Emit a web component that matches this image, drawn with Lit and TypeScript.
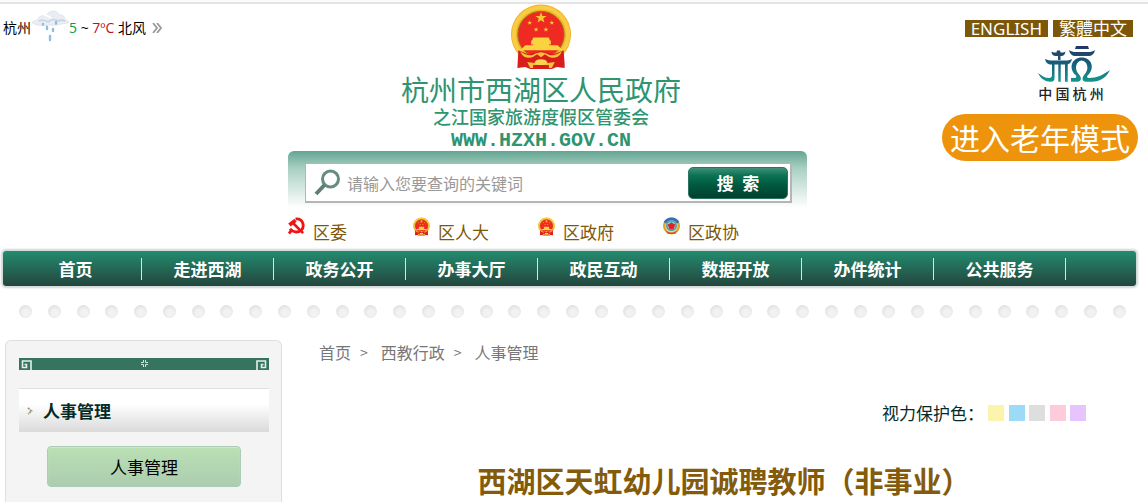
import { LitElement, html, css, svg } from "lit";
import { customElement } from "lit/decorators.js";
import { styleMap } from "lit/directives/style-map.js";

const star = (x: number, y: number, r: number) => {
  const pts: string[] = [];
  for (let i = 0; i < 10; i++) {
    const a = -Math.PI / 2 + (i * Math.PI) / 5;
    const q = i % 2 ? r * 0.4 : r;
    pts.push(`${(x + q * Math.cos(a)).toFixed(1)},${(y + q * Math.sin(a)).toFixed(1)}`);
  }
  return svg`<polygon points=${pts.join(" ")} fill="#f8c832"/>`;
};

const emblem = (cls: string) => html`
  <svg class=${cls} viewBox="0 0 62 66" aria-hidden="true">
    <circle cx="31" cy="31" r="30.500" fill="#f0b427"/>
    <circle cx="31" cy="31" r="27.500" fill="none" stroke="#f9cc45" stroke-width="4"/>
    <circle cx="31" cy="31" r="23.500" fill="#ee2a22" stroke="#a56d12" stroke-width="1"/>
    ${star(31, 14, 6)}${star(19.500, 19, 2.600)}${star(42, 19, 2.600)}${star(26, 26, 2.600)}${star(36, 26, 2.600)}
    <path d="M23 34h16l1 3h1v4h-2v1h9l5 5H10l5-5h8v-1h-2v-4h1z" fill="#fbd340"/>
    <path d="M8 47l10 4 13-3 13 3 10-4 1 14 0 4-8-1-5 2H20l-5-2-8 1z" fill="#d91d1c"/>
    <path d="M10 48c6 5 12 5 16 2l5-1 5 1c4 3 10 3 16-2-2 7-9 8-14 5l-3-2-4 3-4-3-3 2c-5 3-12 2-14-5z" fill="#f6c436"/>
    <path d="M17 59l7 1c2-4 12-4 14 0l7-1-3 6h-3v-3H23v3h-3z" fill="#f6c436"/>
    <ellipse cx="31" cy="59" rx="6" ry="3" fill="#f9d650"/>
  </svg>`;

const party = html`
  <svg class="mark" viewBox="0 0 18 20" aria-hidden="true">
    <g fill="none" stroke="#f01414">
      <path d="M8 2c8-1 10 8 6 12C10 17 5 16 2 12.500" stroke-width="3"/>
      <path d="M4.500 13L1 17.500" stroke-width="3"/>
      <path d="M5 6l11 11" stroke-width="2.800"/>
      <path d="M1.500 8.500L8 3.500" stroke-width="4"/>
    </g>
  </svg>`;

const cppcc = html`
  <svg class="mark" viewBox="0 0 18 20" aria-hidden="true">
    <circle cx="9" cy="9.500" r="7.800" fill="#e6ddba" stroke="#d9a42c" stroke-width="2.400"/>
    <path d="M2 6a8 8 0 0 1 14 0" fill="none" stroke="#2d6fc0" stroke-width="3"/>
    <circle cx="9" cy="9" r="5" fill="#8accc8" stroke="#4a9a9c" stroke-width="1.500"/>
    <path d="M9 5.500l2 1.500 2 1-1 2.500-1 2.500H7l-1-2.500L5 8l2-1z" fill="#e0202a"/>
    <path d="M3 14c3 3.500 9 3.500 12 0l-2 4H5z" fill="#d8562a"/>
  </svg>`;

const cloud = html`
  <svg class="cloud" viewBox="0 0 38 32" aria-hidden="true">
    <path d="M1 13c0-2 4-3 6-3 0-4 5-5 8-4C17 0 26-1 28 5c5-1 6 3 6 5 3 0 4 2 3 3-9 1-11 3-18 2-8 2-14 0-18-2z" fill="#e9edf4" stroke="#d5dbe6" stroke-width=".6"/>
    <path d="M8 11c4-2 7 0 9 1 3-3 8-3 10-1 2-1 5-1 7 0" fill="none" stroke="#c9d2e0" stroke-width="1.500"/>
    <path d="M13 5c4 0 5 2 7 3" fill="none" stroke="#fff" stroke-width="2"/>
    <g stroke="#8dbfe2" stroke-width="2.400" stroke-linecap="round">
      <path d="M12 14v.5M16 17v2M22 19v2M25 12v1.500M19 26v4"/>
    </g>
  </svg>`;

const hangzhou = html`
  <svg class="hz" viewBox="0 0 72 37" aria-hidden="true">
    <defs>
      <linearGradient id="hzg" x1="0" y1="0" x2="0" y2="37" gradientUnits="userSpaceOnUse">
        <stop offset="0" stop-color="#26355e"/><stop offset=".5" stop-color="#14617e"/><stop offset="1" stop-color="#179a8c"/>
      </linearGradient>
    </defs>
    <g fill="url(#hzg)">
      <path d="M38 0h12l1 3H37z"/>
      <path d="M31 4c2 1.500 4 2 7 2h12c3 0 5-.5 7-2-1 4-3 6-7 6H38c-4 0-6-2-7-6z"/>
      <path d="M19 4.500h3l.5 2c2 0 4 0 5-1-.5 3-2 4.500-4 4.500h-6c-2 0-4-1.500-4-4.500 1 1 3 1 5 1z"/>
      <path d="M20 10h2.500v4H20z"/>
      <path d="M7 13c3 1.500 5 1.500 7 1.500h13c3 0 5 0 7-1.500-1 4-3 5.500-6 5.500H13c-3 0-5-1.500-6-5.500z"/>
      <path d="M14 18h2.500v14c0 2.500-1 3.700-4 3.700C7 35.700 3 33 0 27c4 3 7 5 11 5 2 0 3-1 3-3z"/>
      <path d="M20.300 18h2.400v17.700h-2.400zM27 18h2.700v17.700H27z"/>
      <path d="M33 32h3.500c2 0 2.500-1.500 1-3C30 22 34 11.500 43.700 11.500S57.500 22 50 29c-1.500 1.500-1 3 1 3 8 0 14-3 21-8-4 8-10 11.700-18 11.700h-6c-4 0-4.500-4-1.500-7.200C52 23 49 14.500 43.700 14.500S35.500 23 41 28.500c3 3.200 2.500 7.200-1.500 7.200H33z"/>
    </g>
  </svg>`;

const fret = (cls: string) => html`
  <svg class="fret ${cls}" viewBox="0 0 13 12" aria-hidden="true">
    <path d="M12 12V3H3.500v6.500h4V6.500H5.500" fill="none" stroke="#e4efea" stroke-width="1.600"/>
  </svg>`;

@customElement("app-root")
export class AppRoot extends LitElement {
  static styles = css`
    :host {
      display: block;
      overflow: hidden;
      background: #fff;
      color: #111;
      font-family: "Noto Sans CJK SC", "Open Sans", sans-serif;
      font-size: 17px;
      line-height: 24px;
    }
    * { box-sizing: border-box; }
    a { color: inherit; text-decoration: none; }
    button, input { font-family: inherit; border: 0; margin: 0; padding: 0; }
    .rule { height: 4px; border-bottom: 2px solid #e4e4e4; background: #fafafa; }
    header { display: grid; grid-template-columns: 288px 519px 1fr; height: 245px; }
    .weather { display: flex; align-items: center; height: 48px; padding-left: 3px; font-family: "Open Sans", "Noto Sans CJK SC", sans-serif; font-size: 14px; white-space: pre; color: #000; }
    .cloud { width: 38px; height: 32px; margin-top: -4px; }
    .low { color: #0a9a4a; }
    .high { color: #c01018; }
    .more { width: 10px; height: 10px; margin-left: 6px; }
    .brand { display: flex; flex-direction: column; align-items: center; padding-right: 13px; color: #2f9470; height: 147px; }
    .emblem { width: 62px; height: 66px; }
    h1 { margin: 4px 0 0; font-size: 28px; font-weight: 400; line-height: 32px; }
    .sub { font-size: 18px; font-weight: 500; line-height: 22px; }
    .site { font: bold 20px/20px "Liberation Mono", monospace; margin-top: 4px; }
    .search { height: 57px; padding: 12px 15px 5px 17px; border-radius: 6px 6px 0 0; background: linear-gradient(#63a591, #a9cfc3 30%, #fff); }
    .box { display: flex; align-items: center; height: 40px; padding: 0 2px 0 8px; background: #fff; border: 1px solid #b5b5b5; border-width: 1px 2px 2px 1px; }
    .lens { width: 27px; height: 27px; flex: none; }
    .box input { flex: 1; min-width: 0; height: 32px; margin-left: 6px; font-size: 16px; background: none; outline: 0; }
    .box input::placeholder { color: #999; opacity: 1; }
    .go { width: 100px; height: 32px; border-radius: 5px; color: #fff; font-size: 17px; font-weight: 700; line-height: 28px; background: linear-gradient(#3f9078, #0b7252 25%, #00573e 60%, #00402c); border: 1px solid #2b7560; }
    .quick { display: flex; padding-top: 8px; color: #7d5709; }
    .quick a { display: flex; width: 125px; line-height: 32px; }
    .mark { width: 17px; height: 19px; margin: 1px 8px 0 0; }
    .tools { display: flex; flex-direction: column; align-items: flex-end; padding: 16px 10px 0 0; }
    .langs { display: flex; gap: 5px; padding-right: 5px; }
    .langs a { padding: 0 6px; line-height: 17px; background: #7d5709; color: #fff; font-family: "Noto Sans", "Noto Sans CJK TC", sans-serif; }
    .city { display: flex; flex-direction: column; align-items: center; margin: 9px 28px 0 0; font-size: 14px; line-height: 20px; font-weight: 500; color: #222; }
    .city span { padding-right: 6px; }
    .hz { width: 72px; height: 37px; }
    .elder { height: 47px; margin-top: 11px; padding: 0 8px; border-radius: 24px; background: #ed940c; color: #fff; font-size: 30px; line-height: 47px; }
    nav.main { display: flex; align-items: center; margin: 2px 12px 0 3px; height: 35px; padding-left: 7px; border-radius: 3px; background: linear-gradient(#228c6e, #24453d); box-shadow: 0 0 2px 2px #d0d8d5; }
    nav.main a { width: 132px; line-height: 22px; text-align: center; font-weight: 700; color: #fff; border-right: 1px solid #d8e6e1; }
    .dots { display: flex; justify-content: space-between; padding: 0 22px 0 19px; margin-top: 19px; }
    .dots i { width: 13px; height: 13px; border-radius: 50%; background: radial-gradient(circle at 55% 60%, #f2f2f2 30%, #d6d6d6); }
    .page { display: grid; grid-template-columns: 277px 1fr; margin: 22px 12px 0 5px; }
    aside { padding: 17px 12px 15px 13px; border: 1px solid #dedede; border-bottom: 0; border-radius: 6px 6px 0 0; background: #f4f4f4; }
    .band { display: flex; justify-content: space-between; height: 12px; background: #37745f; }
    .fret { width: 13px; height: 12px; }
    .flip { transform: scaleX(-1); }
    .bloom { width: 7px; height: 7px; margin-top: 2px; }
    h2 { display: flex; align-items: center; height: 44px; margin: 18px 0 14px; padding-left: 8px; gap: 10px; font-size: 17px; color: #052b28; border-top: 1px solid #e0e0e0; background: linear-gradient(#fff 35%, #dadada); }
    .arrow { width: 6px; height: 8px; }
    .item { display: block; height: 41px; margin: 0 28px; border: 1px solid #adcbb8; border-radius: 4px; text-align: center; line-height: 39px; color: #000; background: linear-gradient(#bae0b4, #accdaf); box-shadow: inset 0 1px 1px #d0e8cd; }
    .crumbs { display: flex; gap: 9px; padding-left: 37px; font-size: 16px; color: #777; }
    .crumbs span { margin-right: 4px; font-size: 14px; }
    .eye { display: flex; justify-content: flex-end; align-items: center; gap: 4px; padding-right: 50px; margin-top: 37px; color: #052b28; }
    .swatches { display: flex; justify-content: space-between; width: 98px; }
    .swatches button { width: 16px; height: 16px; }
    h3 { margin: 34px 0 0; padding-left: 30px; font-size: 29px; line-height: 42px; text-align: center; color: #835b0b; white-space: nowrap; }
  `;

  private menu = ["首页", "走进西湖", "政务公开", "办事大厅", "政民互动", "数据开放", "办件统计", "公共服务"];
  private tints = [
    ["黄色", "#fcf4ad"], ["蓝色", "#9ddaf7"], ["灰色", "#dedede"], ["粉色", "#ffcbdc"], ["紫色", "#e8c4ff"],
  ];

  render() {
    return html`
      <div class="rule"></div>
      <header>
        <div class="weather"><span>杭州</span>${cloud}<span><span class="low">5</span> ~ <span class="high">7ºC</span> 北风</span>
          <svg class="more" viewBox="0 0 10 10" aria-hidden="true"><path d="M1 0l4 5-4 5M5 0l4 5-4 5" fill="none" stroke="#999" stroke-width="1.800"/></svg></div>
        <div>
          <div class="brand">
            ${emblem("emblem")}
            <h1>杭州市西湖区人民政府</h1>
            <div class="sub">之江国家旅游度假区管委会</div>
            <div class="site">WWW.HZXH.GOV.CN</div>
          </div>
          <form class="search" @submit=${(e: Event) => e.preventDefault()}>
            <div class="box">
              <svg class="lens" viewBox="0 0 27 27" aria-hidden="true">
                <circle cx="16.500" cy="10" r="8" fill="none" stroke="#668d81" stroke-width="3"/>
                <path d="M10.500 16L2 25" stroke="#5d7f75" stroke-width="4"/>
              </svg>
              <input type="text" aria-label="搜索" placeholder="请输入您要查询的关键词"/>
              <button class="go" type="submit">搜&ensp;索</button>
            </div>
          </form>
          <div class="quick">
            <a href="#">${party}区委</a>
            <a href="#">${emblem("mark")}区人大</a>
            <a href="#">${emblem("mark")}区政府</a>
            <a href="#">${cppcc}区政协</a>
          </div>
        </div>
        <div class="tools">
          <div class="langs"><a href="#">ENGLISH</a><a href="#">繁體中文</a></div>
          <a class="city" href="#">${hangzhou}<span>中 国 杭 州</span></a>
          <button class="elder" type="button">进入老年模式</button>
        </div>
      </header>
      <nav class="main">${this.menu.map((m) => html`<a href="#">${m}</a>`)}</nav>
      <div class="dots">${Array.from({ length: 39 }, () => html`<i></i>`)}</div>
      <div class="page">
        <aside>
          <div class="band">
            ${fret("")}
            <svg class="bloom" viewBox="0 0 7 7" aria-hidden="true"><path d="M2.500 0v2.500H0M4.500 0v2.500H7M2.500 7V4.500H0M4.500 7V4.500H7" fill="none" stroke="#d5e3dd"/></svg>
            ${fret("flip")}
          </div>
          <h2><svg class="arrow" viewBox="0 0 6 8" aria-hidden="true"><path d="M1 1l3.500 3L1 7" fill="none" stroke="#a09484" stroke-width="1.800" stroke-dasharray="2 .8"/></svg>人事管理</h2>
          <a class="item" href="#">人事管理</a>
        </aside>
        <main>
          <div class="crumbs">
            <a href="#">首页</a><span>&gt;</span><a href="#">西教行政</a><span>&gt;</span><a href="#">人事管理</a>
          </div>
          <div class="eye">视力保护色：
            <div class="swatches">
              ${this.tints.map(([n, c]) => html`<button type="button" aria-label=${n} style=${styleMap({ background: c })}></button>`)}
            </div>
          </div>
          <h3>西湖区天虹幼儿园诚聘教师（非事业）</h3>
        </main>
      </div>
    `;
  }
}
